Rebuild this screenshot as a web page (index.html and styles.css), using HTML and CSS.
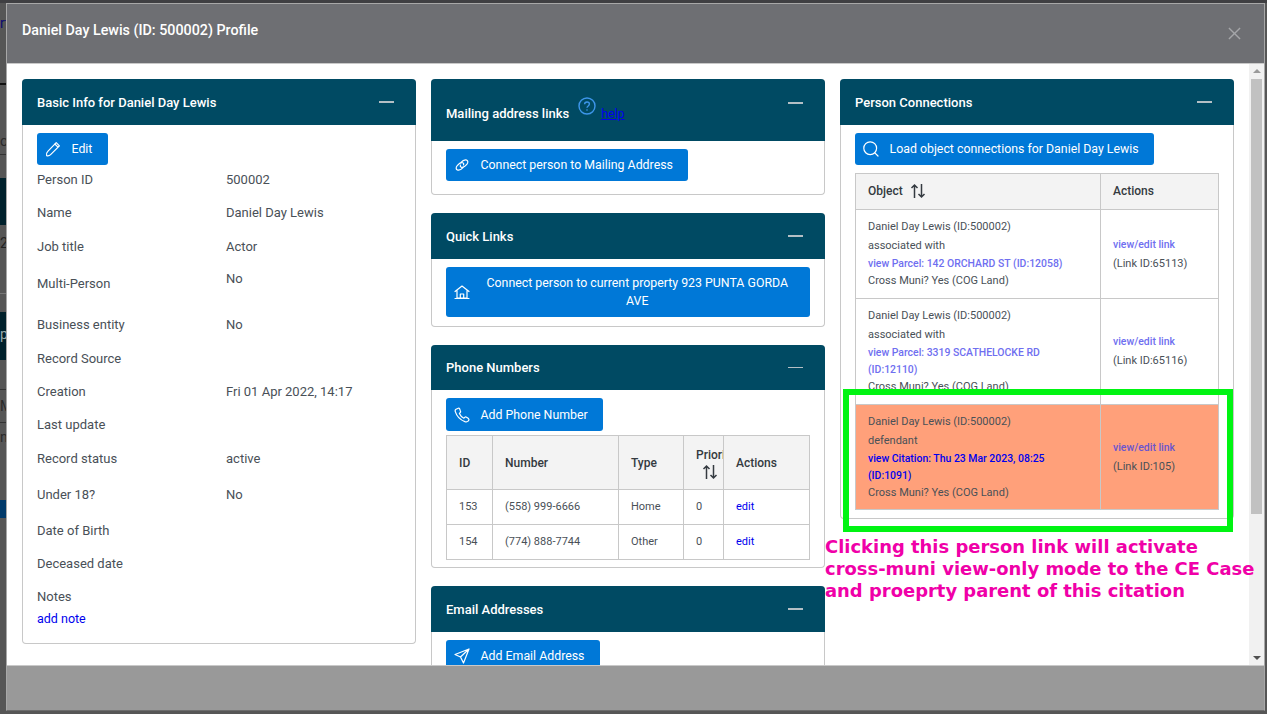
FILE: index.html
```html
<!DOCTYPE html>
<html lang="en">
<head>
<meta charset="utf-8">
<title>Daniel Day Lewis Profile</title>
<link rel="stylesheet" href="styles.css">
</head>
<body>
<div class="backdrop-bits">
  <span class="bit bit-top"></span>
  <span class="bit bit-rt">rt</span>
  <span class="bit bit-line1"></span>
  <span class="bit bit-or">o</span>
  <span class="bit bit-line2"></span>
  <span class="bit bit-navy1"></span>
  <span class="bit bit-2">2</span>
  <span class="bit bit-line3"></span>
  <span class="bit bit-navy2">p</span>
  <span class="bit bit-line4"></span>
  <span class="bit bit-m">M</span>
  <span class="bit bit-line5"></span>
  <span class="bit bit-n">n</span>
  <span class="bit bit-btn"></span>
</div>
<div class="modal">
  <header class="modal-head">
    <h1 class="modal-title">Daniel Day Lewis (ID: 500002) Profile</h1>
    <svg class="close" viewBox="0 0 14 14"><path d="M1 1l12 12M13 1L1 13"/></svg>
  </header>
  <div class="modal-body">
    <div class="content">
      <div class="col">
        <section class="card">
          <div class="card-head"><h2>Basic Info for Daniel Day Lewis</h2><span class="minus"></span></div>
          <div class="card-body info">
            <a class="btn"><svg class="ic" viewBox="0 0 16 16"><path d="M11.2 1.6l3.2 3.2L5.6 13.6c-1 1-2.6 1.4-4 1 -.4-1.4 0-3 1-4zM9.8 3l3.2 3.2"/></svg><span>Edit</span></a>
            <div class="row"><span>Person ID</span><span>500002</span></div>
            <div class="row"><span>Name</span><span>Daniel Day Lewis</span></div>
            <div class="row"><span>Job title</span><span>Actor</span></div>
            <div class="row row-multi"><span>Multi-Person</span><span class="val-up">No</span></div>
            <div class="row row-gap"><span>Business entity</span><span>No</span></div>
            <div class="row"><span>Record Source</span><span></span></div>
            <div class="row"><span>Creation</span><span>Fri 01 Apr 2022, 14:17</span></div>
            <div class="row"><span>Last update</span><span></span></div>
            <div class="row"><span>Record status</span><span>active</span></div>
            <div class="row row-gap"><span>Under 18?</span><span>No</span></div>
            <div class="row row-gap-s"><span>Date of Birth</span><span></span></div>
            <div class="row"><span>Deceased date</span><span></span></div>
            <div class="row row-notes"><span>Notes</span><span></span></div>
            <a class="add-note">add note</a>
          </div>
        </section>
      </div>
      <div class="col">
        <section class="card">
          <div class="card-head card-head-tall"><h2>Mailing address links</h2>
            <svg class="help" viewBox="0 0 18 18"><circle cx="9" cy="9" r="8"/><path d="M6.6 7.2C6.6 5.8 7.700 5 9 5s2.400.8 2.400 2.100c0 1.900-2.400 1.800-2.400 3.700"/><circle class="dot" cx="9" cy="13" r=".8"/></svg>
            <a class="help-link">help</a><span class="minus minus-top"></span></div>
          <div class="card-body pb-mail">
            <a class="btn"><svg class="ic" viewBox="0 0 16 16"><path d="M6.700 5.600c1.500-1.600 4-3.200 6-2.500 1.500.6 1.500 2.700.1 4.300-1.500 1.800-4 3.400-5.600 2.800-.9-.4-1.100-1.200-.8-2.100M9.300 10.400c-1.500 1.600-4 3.200-6 2.500-1.500-.6-1.500-2.700-.1-4.300 1.500-1.800 4-3.400 5.600-2.800.9.400 1.100 1.200.8 2.100"/></svg><span>Connect person to Mailing Address</span></a>
          </div>
        </section>
        <section class="card">
          <div class="card-head"><h2>Quick Links</h2><span class="minus"></span></div>
          <div class="card-body pb-quick">
            <a class="btn btn-wide"><svg class="ic" viewBox="0 0 16 16"><path d="M1 7.500L8 2l7 5.500M3 6.500V14h10V6.500M6.300 14v-4h3.400v4M1 14.500h14"/></svg><span class="btn-center">Connect person to current property 923 PUNTA GORDA AVE</span></a>
          </div>
        </section>
        <section class="card">
          <div class="card-head card-head-short"><h2>Phone Numbers</h2><span class="minus"></span></div>
          <div class="card-body pb-phone">
            <a class="btn btn-phone"><svg class="ic" viewBox="0 0 16 16"><path d="M4.300 1.200L2 2.200c-.8.500-1 1.500-.7 2.500 1.500 4.700 5 8.300 9.600 9.900 1 .3 2.600.3 3.300-.6.800-.9 1-1.700.3-2.400l-2-1.400c-.6-.4-1.300-.3-1.800.2l-.8.800c-2.100-1-3.600-2.700-4.500-4.800l.7-.7c.5-.5.600-1.200.3-1.800L5.600 1.800c-.3-.6-.8-.8-1.300-.6z"/></svg><span>Add Phone Number</span></a>
            <table class="tbl tbl-phone">
              <colgroup><col class="c-id"><col class="c-num"><col class="c-type"><col class="c-pri"><col></colgroup>
              <thead><tr><th>ID</th><th>Number</th><th>Type</th><th class="th-pri"><div class="pri">Priority</div><svg class="sort sort-pri" viewBox="0 0 16 16"><path d="M4.500 15V2M1.500 5l3-3 3 3M11.500 1v13M8.500 11l3 3 3-3"/></svg></th><th>Actions</th></tr></thead>
              <tbody>
                <tr><td>153</td><td>(558) 999-6666</td><td>Home</td><td>0</td><td><a class="edit">edit</a></td></tr>
                <tr><td>154</td><td>(774) 888-7744</td><td>Other</td><td>0</td><td><a class="edit">edit</a></td></tr>
              </tbody>
            </table>
          </div>
        </section>
        <section class="card">
          <div class="card-head"><h2>Email Addresses</h2><span class="minus"></span></div>
          <div class="card-body">
            <a class="btn"><svg class="ic" viewBox="0 0 16 16"><path d="M15 1L1 6.500l5.500 2.500L9.500 15zM15 1L6.500 9"/></svg><span>Add Email Address</span></a>
          </div>
        </section>
      </div>
      <div class="col">
        <section class="card">
          <div class="card-head"><h2>Person Connections</h2><span class="minus"></span></div>
          <div class="card-body">
            <a class="btn"><svg class="ic" viewBox="0 0 16 16"><circle cx="7.200" cy="7.200" r="6.400"/><path d="M11.800 11.800L15 15"/></svg><span>Load object connections for Daniel Day Lewis</span></a>
            <table class="tbl tbl-conn">
              <colgroup><col class="c-obj"><col></colgroup>
              <thead><tr><th>Object <svg class="sort sort-obj" viewBox="0 0 16 16"><path d="M4.500 15V2M1.500 5l3-3 3 3M11.500 1v13M8.500 11l3 3 3-3"/></svg></th><th>Actions</th></tr></thead>
              <tbody>
                <tr>
                  <td><span class="l1">Daniel Day Lewis (ID:500002)</span><span class="l2">associated with</span><a class="vlink">view Parcel: 142 ORCHARD ST (ID:12058)</a><span class="l3">Cross Muni? Yes (COG Land)</span></td>
                  <td><a class="vlink">view/edit link</a><span class="lid">(Link ID:65113)</span></td>
                </tr>
                <tr class="r2">
                  <td><span class="l1">Daniel Day Lewis (ID:500002)</span><span class="l2">associated with</span><a class="vlink">view Parcel: 3319 SCATHELOCKE RD (ID:12110)</a><span class="l3">Cross Muni? Yes (COG Land)</span></td>
                  <td><a class="vlink">view/edit link</a><span class="lid">(Link ID:65116)</span></td>
                </tr>
                <tr class="hot">
                  <td><span class="l1">Daniel Day Lewis (ID:500002)</span><span class="l2">defendant</span><a class="vlink cite">view Citation: Thu 23 Mar 2023, 08:25 (ID:1091)</a><span class="l3">Cross Muni? Yes (COG Land)</span></td>
                  <td><a class="vlink">view/edit link</a><span class="lid">(Link ID:105)</span></td>
                </tr>
              </tbody>
            </table>
          </div>
        </section>
      </div>
    </div>
    <div class="scrollbar">
      <span class="arrow arrow-up"></span>
      <span class="thumb"></span>
      <span class="arrow arrow-down"></span>
    </div>
    <div class="mark"></div>
    <p class="note">Clicking this person link will activate<br>cross-muni view-only mode to the CE Case<br>and proeprty parent of this citation</p>
  </div>
  <footer class="modal-foot"></footer>
</div>
</body>
</html>
```
FILE: styles.css
```css
* { box-sizing: border-box; }
html, body { height: 100%; }
body {
  margin: 0;
  height: 714px;
  padding: 3px 2px 3px 6px;
  overflow: hidden;
  background: #565656;
  font-family: Roboto, "Liberation Sans", sans-serif;
  font-size: 13px;
  color: #495057;
  position: relative;
}
.backdrop-bits { position: absolute; inset: 0; overflow: hidden; }
.bit { position: absolute; left: 0; width: 6px; overflow: hidden; line-height: 16px; white-space: nowrap; }
.bit-top { top: 0; width: 100%; height: 3px; background: #3f3f42; }
.bit-rt { top: 15px; font-size: 14px; color: #0a0a70; }
.bit-line1 { top: 83px; height: 2px; background: #111; }
.bit-or { top: 133px; font-size: 14px; color: #2a2a2a; }
.bit-line2 { top: 154px; height: 1px; background: #333; }
.bit-navy1 { top: 178px; height: 47px; background: #00212c; }
.bit-2 { top: 235px; font-size: 14px; color: #222; }
.bit-line3 { top: 293px; height: 1px; background: #777; }
.bit-navy2 { top: 312px; height: 48px; background: #00212c; color: #9aa; font-size: 14px; line-height: 44px; }
.bit-line4 { top: 389px; height: 1px; background: #333; }
.bit-m { top: 398px; font-size: 14px; color: #2a2a2a; }
.bit-line5 { top: 422px; height: 1px; background: #333; }
.bit-n { top: 429px; font-size: 14px; color: #2a2a2a; }
.bit-btn { top: 500px; height: 18px; background: #003a6a; }

.modal {
  position: relative;
  height: 708px;
  display: flex;
  flex-direction: column;
  border: 1px solid #a8a8a8;
  border-bottom-color: #6c6c6c;
  background: #fff;
}
.modal-head {
  flex: none;
  height: 60px;
  background: #6e6f73;
  border-bottom: 1px solid #c9c9c9;
  display: flex;
  justify-content: space-between;
  padding: 16px 23px 0 15px;
}
.modal-title { margin: 0; font-size: 14.300px; font-weight: 500; color: #fff; line-height: 20px; }
.close { width: 13px; height: 13px; margin-top: 7px; fill: none; stroke: #a5a6a9; stroke-width: 1.500; }

.modal-body { position: relative; flex: none; height: 601px; display: flex; }
.content {
  flex: 1;
  min-width: 0;
  display: grid;
  grid-template-columns: 394px 394px 394px;
  column-gap: 15px;
  padding: 15px 0 0 15px;
  overflow: hidden;
  align-items: start;
}
.col { display: flex; flex-direction: column; gap: 18px; }

.card { border: 1px solid #c8c8c8; border-top: 0; border-radius: 4px; }
.card-head {
  height: 46px;
  margin: 0 -1px;
  background: #004a63;
  border-radius: 4px 4px 0 0;
  display: flex;
  align-items: center;
  padding: 0 22px 0 15px;
  color: #fff;
}
.card-head h2 { margin: 0; font-size: 13px; font-weight: 500; flex: none; }
.card-head-tall { height: 62px; align-items: flex-end; padding-bottom: 20px; position: relative; }
.card-head-short { height: 45px; }
.minus { margin-left: auto; width: 15px; height: 1.500px; background: #b4bfc5; flex: none; }
.minus-top { position: absolute; right: 22px; top: 23px; }
.help { width: 18px; height: 18px; fill: none; stroke: #3d96ea; stroke-width: 1.400; margin: 0 0 6px 9px; flex: none; }
.help .dot { fill: #3d96ea; stroke: none; }
.help-link { margin-left: 5px; color: #0000ee; text-decoration: underline; font-size: 12.300px; }

.card-body { padding: 8px 14px; }
.pb-mail { padding-bottom: 13px; }
.pb-quick { padding-bottom: 9px; }
.pb-phone { padding-bottom: 7px; }
.btn {
  display: inline-flex;
  align-items: center;
  min-height: 32px;
  padding: 0 15px 0 8px;
  background: #0078d7;
  color: #fff;
  border-radius: 3px;
  font-size: 12.350px;
  line-height: 18px;
  vertical-align: top;
}
.ic { width: 16px; height: 16px; flex: none; margin-right: 10.500px; fill: none; stroke: #fff; stroke-width: 1.200; stroke-linejoin: round; stroke-linecap: round; }
.btn-wide { display: flex; padding: 6px 16px 6px 8px; min-height: 50px; }
.btn-center { flex: 1; text-align: center; }
.btn-phone { min-height: 33px; }

.info { padding: 8px 14px 16px; }
.info .btn { min-width: 71px; margin-bottom: -2.200px; }
.row { display: grid; grid-template-columns: 189px 1fr; height: 33.400px; align-items: center; }
.row-multi { height: 42px; }
.val-up { margin-bottom: 10px; }
.row-gap { margin-top: 3px; }
.row-gap-s { margin-top: 2px; }
.row-notes { height: 30px; padding-top: 3px; }
.add-note { display: block; color: #0000ee; font-size: 12.500px; line-height: 17px; }

.tbl { border-collapse: collapse; table-layout: fixed; width: 364px; margin-top: 4px; font-size: 11px; }
.tbl th, .tbl td { border: 1px solid #c8c8c8; padding: 0 12px; text-align: left; overflow: hidden; }
.tbl th { background: #f3f3f3; color: #343a40; font-size: 12px; font-weight: 500; }
.c-id { width: 46px; } .c-num { width: 126px; } .c-type { width: 65px; } .c-pri { width: 40px; }
.tbl-phone thead tr { height: 54px; }
.tbl-phone tbody tr { height: 35px; }
.tbl-phone td { padding-bottom: 2px; }
.th-pri { white-space: nowrap; }
.pri { line-height: 18px; }
.sort { width: 16px; height: 16px; fill: none; stroke: #343a40; stroke-width: 1.500; }
.sort-pri { display: block; margin: 0 0 0 6px; }
.sort-obj { margin-left: 4px; vertical-align: -4px; }
.edit { color: #0000ee; }
.c-obj { width: 245px; }
.tbl-conn { margin-top: 8px; }
.tbl-conn thead tr { height: 36px; }
.tbl-conn th { padding-bottom: 2px; }
.tbl-conn td { padding-top: 8px; padding-bottom: 9px; line-height: 17px; }
.l1, .l2, .l3, .lid { display: block; }
.l1 { margin-bottom: 2px; }
.l2 { margin-bottom: 1px; }
.vlink { color: #6f6ff0; font-size: 10.450px; font-weight: 500; }
.vlink + .lid { margin-top: 2px; }
.r2 td { padding-bottom: 9px; }
.hot td { background: #ffa07a; padding-bottom: 8px; }
.hot .cite { color: #0000ee; }
.hot .vlink:not(.cite) { color: #6a55d0; }

.mark {
  position: absolute;
  left: 836px;
  top: 325px;
  width: 390px;
  height: 143px;
  border: 6px solid #00f412;
}
.note {
  position: absolute;
  left: 818px;
  top: 472px;
  margin: 0;
  font-family: "DejaVu Sans", sans-serif;
  font-size: 17.950px;
  font-weight: 700;
  line-height: 22px;
  color: #f000a8;
  white-space: nowrap;
}

.scrollbar { flex: none; width: 15px; background: #f1f1f1; display: flex; flex-direction: column; align-items: center; }
.thumb { width: 11px; height: 435px; background: #c1c1c1; }
.arrow { width: 0; height: 0; border-left: 4px solid transparent; border-right: 4px solid transparent; }
.arrow-up { border-bottom: 4px solid #9a9a9a; margin: 5px 0 6px; }
.arrow-down { border-top: 4px solid #505050; margin-top: auto; margin-bottom: 5px; }

.modal-foot { flex: 1; background: #999; border-top: 1px solid #c9c9c9; }
```
